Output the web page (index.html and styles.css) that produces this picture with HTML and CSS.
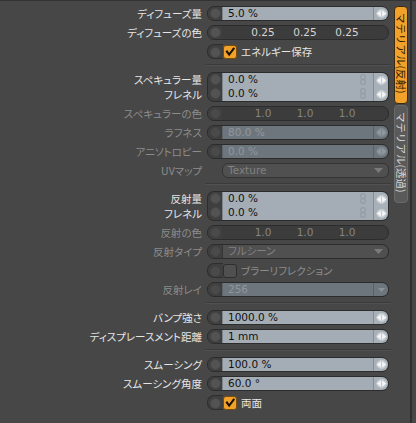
FILE: index.html
```html
<!DOCTYPE html>
<html lang="ja">
<head>
<meta charset="utf-8">
<link rel="stylesheet" href="styles.css">
</head>
<body>
<div class="app">
  <div class="form">
    <div class="group g1">
      <div class="row"><span class="lbl">ディフューズ量</span>
        <div class="fld"><span class="knob"></span><span class="val">5.0 %</span><span class="spin"><svg width="11" height="9" viewBox="0 0 11 9"><ellipse cx="5.5" cy="4.5" rx="5.2" ry="4.4" fill="#c6cdd3"/><path d="M0.8 4.5 L4.9 1.3 V7.7Z M10.2 4.5 L6.1 1.3 V7.7Z" fill="#f4f6f8"/></svg></span></div>
      </div>
      <div class="row"><span class="lbl">ディフューズの色</span>
        <div class="fld color"><span class="knob"></span><span class="cols"><span>0.25</span><span>0.25</span><span>0.25</span></span></div>
      </div>
      <div class="row"><span class="lbl"></span>
        <div class="chk"><span class="knob"></span><span class="box on"><svg width="13" height="13" viewBox="0 0 13 13"><path d="M3.2 6.6 L5.6 9.8 L10.4 3.4" stroke="#1a1206" stroke-width="2.3" fill="none" stroke-linecap="square"/></svg></span><span class="clbl">エネルギー保存</span></div>
      </div>
    </div>
    <div class="sep"></div>
    <div class="group">
      <div class="row"><span class="lbl">スペキュラー量</span>
        <div class="fld ptop"><span class="knob"></span><span class="val">0.0 %<svg class="link" width="8" height="11" viewBox="0 0 8 11"><circle cx="4" cy="3" r="2.4" fill="none" stroke="#949da5" stroke-width="1.2"/><circle cx="4" cy="8" r="2.4" fill="none" stroke="#949da5" stroke-width="1.2"/></svg></span><span class="spin"><svg width="11" height="9" viewBox="0 0 11 9"><ellipse cx="5.5" cy="4.5" rx="5.2" ry="4.4" fill="#c6cdd3"/><path d="M0.8 4.5 L4.9 1.3 V7.7Z M10.2 4.5 L6.1 1.3 V7.7Z" fill="#f4f6f8"/></svg></span></div>
      </div>
      <div class="row tight"><span class="lbl">フレネル</span>
        <div class="fld pbot"><span class="knob"></span><span class="val">0.0 %<svg class="link" width="8" height="11" viewBox="0 0 8 11"><circle cx="4" cy="3" r="2.4" fill="none" stroke="#949da5" stroke-width="1.2"/><circle cx="4" cy="8" r="2.4" fill="none" stroke="#949da5" stroke-width="1.2"/></svg></span><span class="spin"><svg width="11" height="9" viewBox="0 0 11 9"><ellipse cx="5.5" cy="4.5" rx="5.2" ry="4.4" fill="#c6cdd3"/><path d="M0.8 4.5 L4.9 1.3 V7.7Z M10.2 4.5 L6.1 1.3 V7.7Z" fill="#f4f6f8"/></svg></span></div>
      </div>
      <div class="row dis"><span class="lbl">スペキュラーの色</span>
        <div class="fld color"><span class="knob"></span><span class="cols"><span>1.0</span><span>1.0</span><span>1.0</span></span></div>
      </div>
      <div class="row dis"><span class="lbl">ラフネス</span>
        <div class="fld"><span class="knob"></span><span class="val">80.0 %</span><span class="spin"><svg width="11" height="9" viewBox="0 0 11 9"><ellipse cx="5.5" cy="4.5" rx="5.2" ry="4.4" fill="#7f878e"/><path d="M0.8 4.5 L4.9 1.3 V7.7Z M10.2 4.5 L6.1 1.3 V7.7Z" fill="#9199a0"/></svg></span></div>
      </div>
      <div class="row dis"><span class="lbl">アニソトロピー</span>
        <div class="fld"><span class="knob"></span><span class="val">0.0 %</span><span class="spin"><svg width="11" height="9" viewBox="0 0 11 9"><ellipse cx="5.5" cy="4.5" rx="5.2" ry="4.4" fill="#7f878e"/><path d="M0.8 4.5 L4.9 1.3 V7.7Z M10.2 4.5 L6.1 1.3 V7.7Z" fill="#9199a0"/></svg></span></div>
      </div>
      <div class="row dis"><span class="lbl">UVマップ</span>
        <div class="drop nok"><span class="dtxt">Texture</span><svg width="9" height="5" viewBox="0 0 9 5"><path d="M0 0 H9 L4.5 5Z" fill="#7a7a7a"/></svg></div>
      </div>
    </div>
    <div class="sep"></div>
    <div class="group">
      <div class="row"><span class="lbl">反射量</span>
        <div class="fld ptop"><span class="knob"></span><span class="val">0.0 %<svg class="link" width="8" height="11" viewBox="0 0 8 11"><circle cx="4" cy="3" r="2.4" fill="none" stroke="#949da5" stroke-width="1.2"/><circle cx="4" cy="8" r="2.4" fill="none" stroke="#949da5" stroke-width="1.2"/></svg></span><span class="spin"><svg width="11" height="9" viewBox="0 0 11 9"><ellipse cx="5.5" cy="4.5" rx="5.2" ry="4.4" fill="#c6cdd3"/><path d="M0.8 4.5 L4.9 1.3 V7.7Z M10.2 4.5 L6.1 1.3 V7.7Z" fill="#f4f6f8"/></svg></span></div>
      </div>
      <div class="row tight"><span class="lbl">フレネル</span>
        <div class="fld pbot"><span class="knob"></span><span class="val">0.0 %<svg class="link" width="8" height="11" viewBox="0 0 8 11"><circle cx="4" cy="3" r="2.4" fill="none" stroke="#949da5" stroke-width="1.2"/><circle cx="4" cy="8" r="2.4" fill="none" stroke="#949da5" stroke-width="1.2"/></svg></span><span class="spin"><svg width="11" height="9" viewBox="0 0 11 9"><ellipse cx="5.5" cy="4.5" rx="5.2" ry="4.4" fill="#c6cdd3"/><path d="M0.8 4.5 L4.9 1.3 V7.7Z M10.2 4.5 L6.1 1.3 V7.7Z" fill="#f4f6f8"/></svg></span></div>
      </div>
      <div class="row dis"><span class="lbl">反射の色</span>
        <div class="fld color"><span class="knob"></span><span class="cols"><span>1.0</span><span>1.0</span><span>1.0</span></span></div>
      </div>
      <div class="row dis"><span class="lbl">反射タイプ</span>
        <div class="fld kdrop"><span class="knob"></span><div class="drop"><span class="dtxt">フルシーン</span><svg width="9" height="5" viewBox="0 0 9 5"><path d="M0 0 H9 L4.5 5Z" fill="#7a7a7a"/></svg></div></div>
      </div>
      <div class="row dis"><span class="lbl"></span>
        <div class="chk"><span class="knob"></span><span class="box"></span><span class="clbl">ブラーリフレクション</span></div>
      </div>
      <div class="row dis"><span class="lbl">反射レイ</span>
        <div class="fld"><span class="knob"></span><span class="val">256</span><span class="spin"><svg width="7" height="4" viewBox="0 0 7 4"><path d="M0 0 H7 L3.5 4Z" fill="#8b939a"/></svg></span></div>
      </div>
    </div>
    <div class="sep"></div>
    <div class="group">
      <div class="row"><span class="lbl">バンプ強さ</span>
        <div class="fld"><span class="knob"></span><span class="val">1000.0 %</span><span class="spin"><svg width="11" height="9" viewBox="0 0 11 9"><ellipse cx="5.5" cy="4.5" rx="5.2" ry="4.4" fill="#c6cdd3"/><path d="M0.8 4.5 L4.9 1.3 V7.7Z M10.2 4.5 L6.1 1.3 V7.7Z" fill="#f4f6f8"/></svg></span></div>
      </div>
      <div class="row"><span class="lbl">ディスプレースメント距離</span>
        <div class="fld"><span class="knob"></span><span class="val">1 mm</span><span class="spin"><svg width="11" height="9" viewBox="0 0 11 9"><ellipse cx="5.5" cy="4.5" rx="5.2" ry="4.4" fill="#c6cdd3"/><path d="M0.8 4.5 L4.9 1.3 V7.7Z M10.2 4.5 L6.1 1.3 V7.7Z" fill="#f4f6f8"/></svg></span></div>
      </div>
    </div>
    <div class="sep"></div>
    <div class="group">
      <div class="row"><span class="lbl">スムーシング</span>
        <div class="fld"><span class="knob"></span><span class="val">100.0 %</span><span class="spin"><svg width="11" height="9" viewBox="0 0 11 9"><ellipse cx="5.5" cy="4.5" rx="5.2" ry="4.4" fill="#c6cdd3"/><path d="M0.8 4.5 L4.9 1.3 V7.7Z M10.2 4.5 L6.1 1.3 V7.7Z" fill="#f4f6f8"/></svg></span></div>
      </div>
      <div class="row"><span class="lbl">スムーシング角度</span>
        <div class="fld"><span class="knob"></span><span class="val">60.0 °</span><span class="spin"><svg width="11" height="9" viewBox="0 0 11 9"><ellipse cx="5.5" cy="4.5" rx="5.2" ry="4.4" fill="#c6cdd3"/><path d="M0.8 4.5 L4.9 1.3 V7.7Z M10.2 4.5 L6.1 1.3 V7.7Z" fill="#f4f6f8"/></svg></span></div>
      </div>
      <div class="row"><span class="lbl"></span>
        <div class="chk"><span class="knob"></span><span class="box on"><svg width="13" height="13" viewBox="0 0 13 13"><path d="M3.2 6.6 L5.6 9.8 L10.4 3.4" stroke="#1a1206" stroke-width="2.3" fill="none" stroke-linecap="square"/></svg></span><span class="clbl">両面</span></div>
      </div>
    </div>
  </div>
  <div class="tabs">
    <div class="tab active"><span>マテリアル(反射)</span></div>
    <div class="tab"><span>マテリアル(透過)</span></div>
  </div>
  <div class="edge"></div>
</div>
</body>
</html>
```
FILE: styles.css
```css
html, body {
  margin: 0;
  padding: 0;
  background: #474747;
  width: 416px;
  height: 423px;
  overflow: hidden;
}

.app {
  display: flex;
  height: 423px;
  border-top: 1px solid #333333;
  box-sizing: border-box;
  font-family: "Noto Sans CJK JP", "Noto Sans", sans-serif;
}

.form {
  width: 392px;
  flex: none;
  padding-top: 5px;
  box-sizing: border-box;
}

.group {
  display: flex;
  flex-direction: column;
  gap: 4px;
}

.row {
  display: grid;
  grid-template-columns: 202px 182px;
  column-gap: 5px;
  height: 15px;
  align-items: center;
}

.row.tight {
  margin-top: -4px;
}

.lbl {
  text-align: right;
  font-size: 10.5px;
  font-feature-settings: "palt";
  color: #e6e6e6;
  line-height: 15px;
  white-space: nowrap;
}

.dis .lbl,
.dis .clbl {
  color: #8c8c8c;
}

.sep {
  margin: 5px 0 6px 205px;
  width: 186px;
  height: 1px;
  background: #3a3a3a;
  border-bottom: 1px solid #515151;
}

.fld {
  height: 15px;
  box-sizing: border-box;
  border: 1px solid #2c2c2c;
  border-radius: 7px;
  background: #3c3c3c;
  display: flex;
  overflow: hidden;
}

.fld.ptop {
  border-radius: 7px 7px 0 0;
  border-bottom: none;
  height: 15px;
}

.fld.pbot {
  border-radius: 0 0 7px 7px;
  border-top: none;
  height: 15px;
}

.knob {
  width: 14px;
  flex: none;
  position: relative;
  background: #3f3f3f;
}

.knob::after {
  content: "";
  position: absolute;
  left: 2px;
  top: 1px;
  width: 9px;
  height: 9px;
  border-radius: 50%;
  background: #535353;
  border: 1px solid #474747;
}

.val {
  flex: 1;
  position: relative;
  background: #a4adb5;
  color: #111111;
  font-family: "DejaVu Sans", sans-serif;
  font-size: 10.5px;
  line-height: 13px;
  padding-left: 5px;
  border-left: 1px solid #7d868d;
}

.val .link {
  position: absolute;
  right: 6px;
  top: 1px;
}

.spin {
  width: 14px;
  flex: none;
  background: #a9b1b8;
  border-left: 1px solid #858e95;
  display: flex;
  align-items: center;
  justify-content: center;
}

.dis .knob::after {
  background: #4a4a4a;
  border-color: #424242;
}

.dis .val {
  background: #6e767d;
  color: #8f979d;
  border-left-color: #5d656b;
}

.dis .spin {
  background: #6e767d;
  border-left-color: #5a6167;
}

.color .cols {
  flex: 1;
  display: grid;
  grid-template-columns: repeat(3, 42px);
  padding-left: 20px;
  font-family: "DejaVu Sans", sans-serif;
  font-size: 10.5px;
  line-height: 13px;
  color: #d4d4d4;
  text-align: center;
}

.dis .color .cols {
  color: #848484;
}

.drop {
  height: 15px;
  box-sizing: border-box;
  border: 1px solid #343434;
  border-radius: 6px;
  background: #505050;
  display: flex;
  align-items: center;
  justify-content: space-between;
  padding: 0 5px 0 5px;
}

.drop.nok {
  margin-left: 15px;
}

.kdrop {
  background: #404040;
}

.kdrop .drop {
  flex: 1;
  border: none;
  border-left: 1px solid #353535;
  border-radius: 0 6px 6px 0;
  height: 13px;
}

.dtxt {
  font-family: "DejaVu Sans", "Noto Sans CJK JP", sans-serif;
  font-size: 10.5px;
  font-feature-settings: "palt";
  color: #818181;
  line-height: 13px;
}

.chk {
  display: flex;
  align-items: center;
  height: 15px;
  white-space: nowrap;
}

.chk .knob {
  height: 15px;
  box-sizing: border-box;
  width: 16px;
  border: 1px solid #2e2e2e;
  border-right: none;
  border-radius: 7px 0 0 7px;
}

.chk .knob::after {
  left: 2px;
  top: 2px;
}

.box {
  width: 14px;
  height: 14px;
  box-sizing: border-box;
  border-radius: 3px;
  background: #505050;
  border: 1px solid #2e2e2e;
  display: flex;
  align-items: center;
  justify-content: center;
}

.box.on {
  background: #f2a12a;
  border-color: #7a4c0a;
}

.clbl {
  margin-left: 4px;
  font-size: 10.5px;
  font-feature-settings: "palt";
  color: #e6e6e6;
  line-height: 15px;
}

.tabs {
  width: 18px;
  flex: none;
  padding-top: 5px;
  padding-left: 2px;
  box-sizing: border-box;
  display: flex;
  flex-direction: column;
  gap: 1px;
}

.tab {
  width: 14px;
  height: 98px;
  box-sizing: border-box;
  border-radius: 4px;
  background: #5a5a5a;
  border: 1px solid #6a6a6a;
  display: flex;
  justify-content: center;
  padding-top: 6px;
}

.tab span {
  writing-mode: vertical-rl;
  text-orientation: sideways;
  font-size: 10.5px;
  line-height: 12px;
  color: #d6d6d6;
  white-space: nowrap;
}

.tab.active {
  background: #f2a12a;
  border-color: #3a2a10;
}

.tab.active span {
  color: #2a1a05;
}

.edge {
  width: 2px;
  flex: none;
  background: #2f2f2f;
}
```
